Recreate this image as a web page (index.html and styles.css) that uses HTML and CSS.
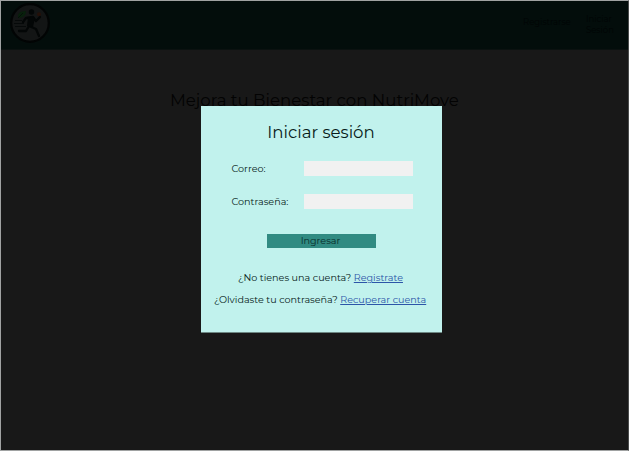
FILE: index.html
```html
<!DOCTYPE html>
<html lang="es">
<head>
<meta charset="utf-8">
<title>NutriMove</title>
<link rel="stylesheet" href="styles.css">
</head>
<body>
<div class="page">
  <header class="bar">
    <svg class="logo" viewBox="0 0 42 42">
      <circle cx="21" cy="21" r="18.8" fill="#131515" stroke="#020404" stroke-width="2.2"/>
      <path d="M9 16Q8 9 17 9Q17 16 9 16Z" fill="#08200c"/>
      <path d="M9 16L14 11" stroke="#050808" stroke-width=".7"/>
      <circle cx="22.5" cy="10" r="2.7" fill="#030606"/>
      <circle cx="30" cy="12.2" r="2" fill="#241009"/>
      <path d="M14 20L17 16L24 15L27 19L31 15M22 16L20 24L27 27L30 34M20 24L17 29L10 29" fill="none" stroke="#030606" stroke-width="2.3" stroke-linecap="round" stroke-linejoin="round"/>
      <path d="M19 15L26 16L24 25L18 24Z" fill="#030606"/>
      <path d="M6 18.5h7M5 21.5h10M6 24.5h11" stroke="#050808" stroke-width=".9"/>
    </svg>
    <nav class="nav"><span class="register">Registrarse</span><span class="login">Iniciar<br>Sesión</span></nav>
  </header>
  <main class="hero"><h1>Mejora tu Bienestar con NutriMove</h1></main>
</div>
<section class="dialog">
  <h2>Iniciar sesión</h2>
  <form class="form">
    <label class="field"><span>Correo:</span><input type="text"></label>
    <label class="field"><span>Contraseña:</span><input type="password"></label>
    <button type="button">Ingresar</button>
  </form>
  <p class="signup">¿No tienes una cuenta? <a href="#">Registrate</a></p>
  <p class="recover">¿Olvidaste tu contraseña? <a href="#">Recuperar cuenta</a></p>
</section>
</body>
</html>
```
FILE: styles.css
```css
* { box-sizing: border-box; }
body {
  margin: 0;
  width: 630px;
  height: 452px;
  overflow: hidden;
  background: #fff;
  font-family: Montserrat, Inter, sans-serif;
  font-size: 9.62px;
  color: #081c1a;
}
h1, h2, p { margin: 0; font-weight: 400; white-space: nowrap; }
.page {
  height: 451px;
  width: 629px;
  background: #181818;
  border: 1px solid #a0a2a2;
  border-right-color: #4a4c4c;
  color: #030303;
}
.bar {
  height: 49px;
  display: flex;
  justify-content: space-between;
  background: #030d0b;
  border-bottom: 1px solid #0b1110;
}
.logo { width: 42px; height: 42px; margin: 1px 0 0 8px; }
.nav { display: flex; line-height: 10.5px; color: #010404; font-size: 8.5px; }
.register { width: 63px; padding-top: 16px; }
.login { width: 42px; padding-top: 13px; }
.hero { padding-top: 38px; padding-left: 169px; }
h1 { font-size: 16.6px; line-height: 24px; }
.dialog {
  position: absolute;
  left: 201px;
  top: 106px;
  width: 241px;
  height: 227px;
  padding-top: 14px;
  background: #c1f2ed;
  border-bottom: 1px solid #6d8783;
}
h2 { padding-right: 1px; text-align: center; font-size: 16.6px; line-height: 24px; color: #081c1a; }
.form { display: flex; flex-direction: column; padding: 17px 29px 0 30.5px; }
.field { display: flex; justify-content: space-between; align-items: center; height: 15px; margin-bottom: 18px; }
input { width: 109px; height: 15px; padding: 0; border: 0; background: #f1f1f1; }
button {
  width: 109px;
  height: 14px;
  margin: 7px 0 0 35.5px;
  padding: 0 2px 0 0;
  border: 0;
  background: #318b82;
  color: #082c29;
  font: inherit;
  line-height: 14px;
}
.signup { margin: 23px 0 0 37px; line-height: 14px; }
.recover { margin: 8px 0 0 13px; line-height: 14px; }
a { color: #2c55a8; text-decoration: underline; text-decoration-thickness: 1px; }
```
